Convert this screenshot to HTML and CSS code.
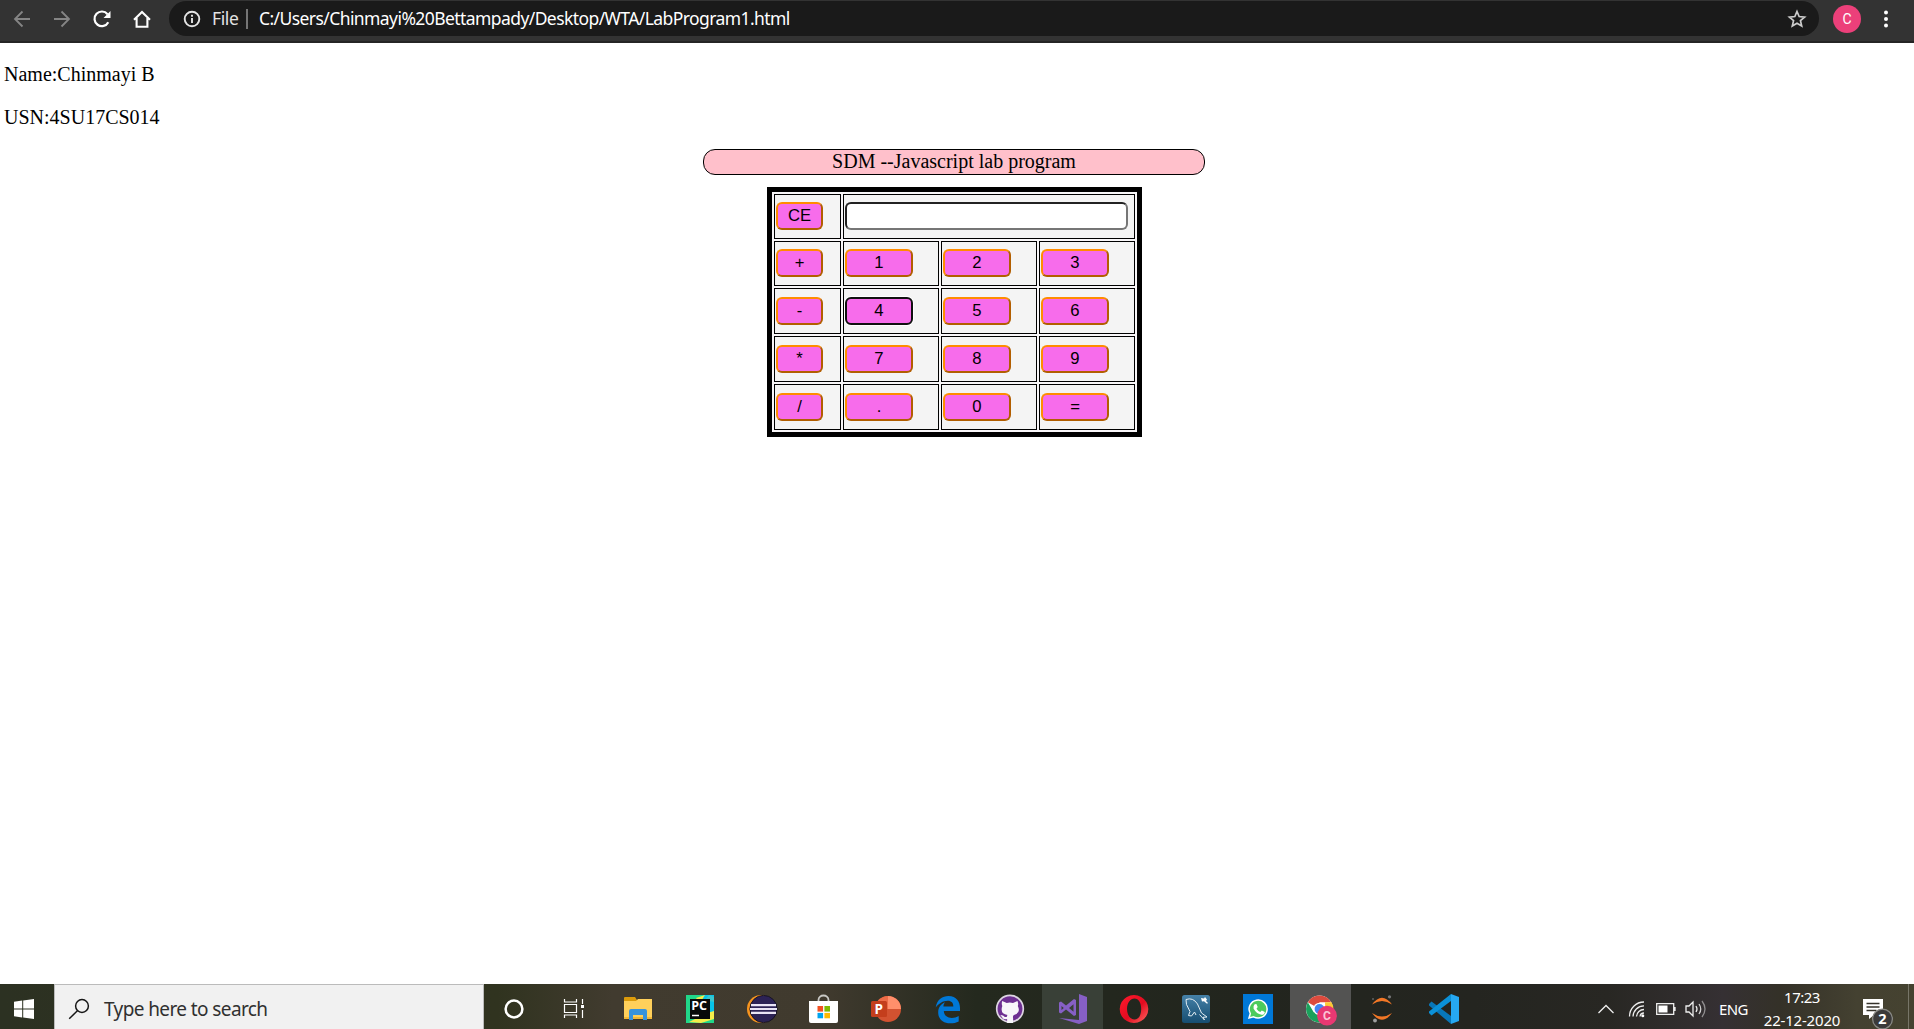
FILE: index.html
```html
<!DOCTYPE html>
<html lang="en">
<head>
<meta charset="utf-8">
<title>LabProgram1.html</title>
<link rel="stylesheet" href="styles.css">
</head>
<body>
<header class="toolbar">
  <nav class="nav">
    <svg class="dim" viewBox="0 0 20 20"><path d="M18 10H3M10.500 2.500L3 10l7.500 7.500"/></svg>
    <svg class="dim" viewBox="0 0 20 20"><path d="M2 10h15M9.500 2.500L17 10l-7.500 7.500"/></svg>
    <svg viewBox="0 0 20 20"><path d="M16.300 13.200A7.300 7.300 0 1 1 15.500 5.200" stroke-width="2.200"/><path d="M18.500 2v7h-7z" fill="#fff" stroke="none"/></svg>
    <svg viewBox="0 0 20 20"><path d="M2 10.700L10 3l8 7.700M4.600 9v8.700h10.800V9" stroke-width="2.100"/></svg>
  </nav>
  <div class="omnibox">
    <svg class="info" viewBox="0 0 18 18"><circle cx="9" cy="9" r="7.300"/><path d="M9 8v5M9 4.800v2"/></svg>
    <span class="scheme">File</span><span class="divider"></span><span class="url">C:/Users/Chinmayi%20Bettampady/Desktop/WTA/LabProgram1.html</span>
    <svg class="star" viewBox="0 0 20 20"><path d="M10 2.500l2.150 5.050 5.450.5-4.150 3.600 1.250 5.350L10 14.150 5.300 17l1.250-5.350L2.400 8.050l5.450-.5z"/></svg>
  </div>
  <span class="avatar">C</span>
  <svg class="menu" viewBox="0 0 6 18"><circle cx="3" cy="2.500" r="2"/><circle cx="3" cy="9" r="2"/><circle cx="3" cy="15.500" r="2"/></svg>
</header>

<main class="page">
  <p>Name:Chinmayi B</p>
  <p>USN:4SU17CS014</p>
  <div class="banner">SDM --Javascript lab program</div>
  <table class="calc">
    <colgroup><col class="ops"><col><col><col></colgroup>
    <tr class="short"><td><button>CE</button></td><td colspan="3"><input type="text" aria-label="Result"></td></tr>
    <tr class="short"><td><button>+</button></td><td><button>1</button></td><td><button>2</button></td><td><button>3</button></td></tr>
    <tr><td><button>-</button></td><td><button class="focused">4</button></td><td><button>5</button></td><td><button>6</button></td></tr>
    <tr><td><button>*</button></td><td><button>7</button></td><td><button>8</button></td><td><button>9</button></td></tr>
    <tr><td><button>/</button></td><td><button>.</button></td><td><button>0</button></td><td><button>=</button></td></tr>
  </table>
</main>

<footer class="taskbar">
  <div class="start"><svg viewBox="0 0 20 20"><path d="M0 2.800L8.200 1.600V9.500H0zM9.200 1.500L20 0v9.500H9.200zM0 10.500h8.200v7.900L0 17.200zM9.200 10.500H20V20L9.200 18.500z" fill="#fff"/></svg></div>
  <div class="search">
    <svg viewBox="0 0 22 22"><circle cx="14" cy="8" r="6.400"/><path d="M9.400 12.700L1.200 20.800"/></svg>
    <span>Type here to search</span>
  </div>
  <div class="apps">
    <svg viewBox="0 0 62 45"><circle cx="31" cy="25" r="8.400" fill="none" stroke="#fff" stroke-width="2.500"/></svg>
    <svg viewBox="0 0 62 45"><path d="M19.500 15v3h12v-3M19.500 20.500h12v8h-12zM19.500 34v-3h12v3M37.500 15v5M37.500 26v8" fill="none" stroke="#fff" stroke-width="1.200"/><path d="M36 21h3v3h-3z" fill="#fff"/></svg>
    <svg viewBox="0 0 62 45"><path d="M17 14q0-1 1-1h10l2 3v3H17z" fill="#dc9b0b"/><path d="M17 17h12l2-2h14v20H17z" fill="#ffd05b"/><path d="M17 33h28v2H17z" fill="#f2b735"/><path d="M22 36V27q0-2 2-2h14q2 0 2 2v9h-4v-5H26v5z" fill="#3793dc"/></svg>
    <svg viewBox="0 0 62 45"><path d="M17 11h28v28H17z" fill="#21d789"/><path d="M34 11h11v18H34z" fill="#07c3e8"/><path d="M36 11l-9 3 4 5zM45 27v8l-13 4-12-1 18-9z" fill="#f4ed4a"/><path d="M45 18v-5l-5-2-4 5z" fill="#3bc6cd"/><path d="M21 15h20v20H21z" fill="#080a09"/><path d="M23 31.500h7" stroke="#fff" stroke-width="1.500"/><text x="22.200" y="26.300" class="pc">PC</text></svg>
    <svg viewBox="0 0 62 45"><circle cx="30" cy="25" r="14" fill="#f7941e"/><circle cx="32.500" cy="25" r="13.600" fill="#2c2255" stroke="#161323"/><path d="M20 21.200h25M19 25h27M20 28.800h25" stroke="#e9e4f4" stroke-width="2.200"/></svg>
    <svg viewBox="0 0 62 45"><path d="M25.500 18v-2c0-6 10-6 10 0v2" fill="none" stroke="#c9c9c5" stroke-width="1.800"/><path d="M16 17h29v20q0 2-2 2H18q-2 0-2-2z" fill="#fff"/><path d="M24.500 22h5.600v5.600h-5.600z" fill="#f25022"/><path d="M31.400 22H37v5.600h-5.600z" fill="#7fba00"/><path d="M24.500 28.900h5.600v5.400h-5.600z" fill="#00a4ef"/><path d="M31.400 28.900H37v5.400h-5.600z" fill="#ffb900"/></svg>
    <svg viewBox="0 0 62 45"><circle cx="33" cy="25" r="13" fill="#d35230"/><path d="M33 12a13 13 0 0 1 13 13H33z" fill="#ff8f6b"/><path d="M33 12v13H20a13 13 0 0 1 13-13z" fill="#ed6c47"/><rect x="16" y="17" width="16" height="16" rx="1.500" fill="#c43e1c"/><text x="19.500" y="29.800" class="pp">P</text></svg>
    <svg viewBox="0 0 62 45"><path d="M18.700 23.500C20 15.500 25.500 12 31.500 12 39.500 12 43 18 43 24v3H26.800c.3 5 4.200 6.900 8 6.900 2.700 0 4.900-.8 6.900-2v5.500c-2.500 1.200-5.300 1.900-8.500 1.900-7.500 0-12-4.500-12-10.900 0-5 2.500-8.200 6.800-10.100-1 1.200-1.500 2.600-1.600 4.100h9.900c.1-3.200-1.600-5.600-5.600-5.600-4.800 0-9.100 2.900-12 6.700z" fill="#0078d7"/></svg>
    <svg viewBox="0 0 62 45"><circle cx="31" cy="24.700" r="13.300" fill="#6e3092" stroke="#ddd5e2" stroke-width="1.700"/><path d="M23.200 17l4.500 2q3-1 6.300 0l4.500-2q1.200 3 .3 5 3.400 7-3.800 9-1.500 1-.9 3v5h-6v-4q-4 .8-5.200-2l-1.600-2q3.200 0 4.500 2h2q0-1.700.8-2-8-1.500-5.300-9-1-2-.1-5z" fill="#f8f6fa"/></svg>
    <svg class="open" viewBox="0 0 62 45"><path d="M38 10l8 3v24l-8 3-20-6 20 2z" fill="#865fc5"/><path d="M18 18.500l2-1 5 4 8-6.500 2 1v15l-2 1-8-6.500-5 4-2-1zM20.500 22v4l2.300-2zM28 24l4.500 3.800v-7.600z" fill="#865fc5" fill-rule="evenodd"/></svg>
    <svg viewBox="0 0 62 45"><defs><linearGradient id="opera" x2="1" y2="1"><stop stop-color="#ff1b2d"/><stop offset=".55" stop-color="#e30b20"/><stop offset="1" stop-color="#ff6b64"/></linearGradient></defs><path fill-rule="evenodd" d="M31 11a14.300 14 0 1 0 .01 0zM31.500 14.500c4.200 0 6.700 4.500 6.700 10.500s-2.500 10.500-6.700 10.500S24 31 24 25s3.300-10.500 7.500-10.500z" fill="url(#opera)"/></svg>
    <svg viewBox="0 0 62 45"><defs><linearGradient id="sql" x2="0" y2="1"><stop stop-color="#4681a8"/><stop offset="1" stop-color="#164d71"/></linearGradient></defs><rect x="17" y="11" width="28" height="28" rx="2.500" fill="url(#sql)"/><path d="M21 15.500q7-2.500 11.500 4.500l4 9 5.500 4-4 .3 1.500 2.700-5-5.500M21 15.500l.5 5 3.500 7-1.500 4 3 .5 3-4 1.500 3" fill="none" stroke="#e4eef4"/><path d="M36 14l3 .5 1-1.500 2 2.500-1 1.500 2 2-1 .7-3-2.500-2 .3z" fill="#fff"/></svg>
    <svg viewBox="0 0 62 45"><path d="M16 10h30v30H16z" fill="#0078d7"/><path d="M22 34l1.300-4.500A9 9 0 1 1 26.600 32.800z" fill="#4ccb5d" stroke="#fff" stroke-width="1.500"/><path d="M27.700 20.300l1.700-.3 1.300 3-1.200 1.700q1.400 2.300 3.800 3.400l1.500-1.600 3 1.500q-.2 3-3.300 2.800-4.800-.7-7.900-6-1-2.500 1.100-4.500z" fill="#fff"/></svg>
    <svg class="current" viewBox="0 0 62 45"><circle cx="30.500" cy="25" r="13.500" fill="#fff"/><path d="M30.500 25L18.800 18.300A13.500 13.500 0 0 1 42.200 18.300H30.500z" fill="#dd4b3e"/><path d="M42.500 18.300A13.500 13.500 0 0 1 30.500 38.500L36.300 28 36 18.300z" fill="#fcc934"/><path d="M18.800 18.300A13.500 13.500 0 0 0 30.500 38.500L35 30 24.700 28.300z" fill="#1ba15c"/><circle cx="30.500" cy="25" r="6.200" fill="#fff"/><circle cx="30.500" cy="25" r="4.900" fill="#4285f4"/><circle cx="38" cy="31.700" r="9.900" fill="#e83872"/><text x="33.900" y="36" class="cc">C</text></svg>
    <svg viewBox="0 0 62 45"><path d="M21 20.500q10-13.500 20 0-10-7-20 0zM21 29q10 13.500 20 0-10 7-20 0z" fill="#f37726"/><circle cx="38.500" cy="12.800" r="1.600" fill="#767677"/><circle cx="22" cy="15" r="1" fill="#616262"/><circle cx="24" cy="36.500" r="1.900" fill="#9e9e9e"/></svg>
    <svg viewBox="0 0 62 45"><path d="M16 20l2.500-2.500L38 32v8L16 21.500z" fill="#0877b9"/><path d="M16 29l2.500 2.500L38 17v-7L16 27.500z" fill="#0b91d8"/><path d="M38 10l8 3v24l-8 3z" fill="#26a8f2"/></svg>
  </div>
  <div class="tray">
    <svg class="chevron" viewBox="0 0 18 12"><path d="M1.500 10L9 2.500l7.500 7.500"/></svg>
    <svg class="wifi" viewBox="0 0 18 18"><path d="M1.500 16.500A14.500 14.500 0 0 1 16 2M5 16.500A11 11 0 0 1 16 5.800M8.500 16.500A7.500 7.500 0 0 1 16 9.500M12 16.500a4 4 0 0 1 4-3.500"/><circle cx="14.800" cy="15.800" r="1.500" class="solid"/></svg>
    <svg class="battery" viewBox="0 0 20 12"><path d="M.7.700h17v10.600H.7zM19 4v4"/><path class="solid" d="M2.500 2.500h9v7h-9z"/></svg>
    <svg class="speaker" viewBox="0 0 22 18"><path d="M1 6h3l4-4v14l-4-4H1zM11 6q2 3 0 6"/><path d="M14 4q3.500 5 0 10" opacity=".85"/><path d="M17 1q6 8 0 16" opacity=".5"/></svg>
    <span class="lang">ENG</span>
    <div class="clock"><span>17:23</span><span class="date">22-12-2020</span></div>
    <svg class="notes" viewBox="0 0 32 32"><path d="M1 1h20v16h-9l-5 4v-4H1z" fill="#fff"/><path d="M4.500 5.500h13M4.500 9h13M4.500 12.500h10" stroke="#34322a" stroke-width="1.300"/><circle cx="20.500" cy="21" r="9.900" fill="#3b3a3a" stroke="#888884"/><text x="16.300" y="26" class="count">2</text></svg>
    <span class="peek"></span>
  </div>
</footer>
</body>
</html>
```
FILE: styles.css
```css
* { box-sizing: border-box; }

body {
  margin: 0;
  height: 1029px;
  display: flex;
  flex-direction: column;
  overflow: hidden;
  background: #fff;
}

svg { display: block; flex: none; }

/* Browser toolbar */
.toolbar {
  height: 43px;
  flex: none;
  display: flex;
  align-items: flex-start;
  background: #333;
  border-bottom: 2px solid #252525;
  font-family: "Noto Sans", sans-serif;
}
.nav { display: flex; gap: 20px; padding: 9px 17px 0 12px; }
.nav svg { width: 20px; height: 20px; fill: none; stroke: #fff; stroke-width: 1.800; }
.nav .dim { stroke: #858585; }
.omnibox {
  width: 1650px;
  height: 35px;
  margin-top: 1px;
  padding: 0 12px 0 14px;
  display: flex;
  align-items: center;
  border-radius: 18px;
  background: #1a1a1a;
  color: #fff;
  font-size: 17.500px;
  line-height: 24px;
  white-space: nowrap;
}
.info { width: 18px; height: 18px; fill: none; stroke: #e4e4e4; stroke-width: 1.900; }
.scheme { width: 26px; margin: -1px 0 0 11px; color: #e2e2e2; letter-spacing: -0.400px; }
.divider { width: 2px; height: 20px; margin: 0 11px 0 8px; background: #757575; }
.url { margin-top: -1px; letter-spacing: -0.580px; }
.star { width: 20px; height: 20px; margin-left: auto; fill: none; stroke: #ccc; stroke-width: 1.700; }
.avatar {
  width: 28px;
  height: 28px;
  margin: 5px 0 0 14px;
  border-radius: 50%;
  background: #ec407a;
  color: #fff;
  font: 14px/28px Roboto, sans-serif;
  text-align: center;
}
.menu { width: 6px; height: 18px; margin: 10px 0 0 22px; fill: #fff; }

/* Lab page */
.page {
  flex: 1;
  padding: 20px 0 0;
  font: 20px/22px "Liberation Serif", serif;
  color: #000;
}
.page p { margin: 0 0 21px 4px; }
.banner {
  width: 502px;
  height: 26px;
  margin: 0 0 12px 703px;
  border: 1px solid #000;
  border-radius: 12px;
  background: #ffc0cb;
  line-height: 22px;
  text-align: center;
}
.calc {
  width: 375px;
  height: 250px;
  margin-left: 767px;
  table-layout: fixed;
  border: 5px solid #000;
  border-spacing: 2px;
  background: #f8f6f8;
}
.calc col { width: 96px; }
.calc .ops { width: 67px; }
.calc tr { height: 46px; }
.calc .short { height: 45px; }
.calc td { padding: 0 1px; border: 1px solid #000; background: #f4f4f4; vertical-align: middle; }
.calc .short td { padding-bottom: 1px; }
.calc button, .calc input {
  display: block;
  width: 68px;
  height: 28px;
  margin: 0;
  padding: 0;
  border: 2px solid;
  border-radius: 6px;
}
.calc button {
  border-color: #ff8c00 #b25e00 #b25e00 #ff8c00;
  background: #f76ceb;
  color: #000;
  font: 16.667px "Liberation Sans", sans-serif;
}
.calc td:first-child button { width: 47px; }
.calc .focused { border-color: #101010; box-shadow: 0 0 0 1px #fff; }
.calc input { width: 283px; border-color: #222 #767676 #767676 #222; background: #fff; }

/* Taskbar */
.taskbar {
  height: 45px;
  flex: none;
  display: flex;
  background: linear-gradient(90deg, #2c3122 0, #30331f 26%, #413b2f 32%, #403a2e 43%, #24291e 51%, #22251e 65%, #242520 77%, #282723 84%, #353033 90%, #343128 93%, #444131 97%, #454230 100%);
  color: #fff;
  font-family: "Noto Sans", sans-serif;
}
.start { width: 54px; padding: 15px 0 0 14px; }
.start svg { width: 20px; height: 20px; }
.search {
  width: 430px;
  margin-right: -1px;
  display: flex;
  align-items: center;
  gap: 14px;
  padding: 3px 0 0 13px;
  border: solid #bbb;
  border-width: 1px 1px 0;
  background: #f1f1f1;
  color: #303030;
  font-size: 19px;
  letter-spacing: -0.600px;
}
.search span { padding-top: 1px; }
.search svg { width: 22px; height: 22px; fill: none; stroke: #171717; stroke-width: 1.500; }
.apps { display: flex; }
.apps svg { width: 62px; height: 45px; }
.open { background: linear-gradient(90deg, transparent 1px, #394037 1px); }
.current { background: linear-gradient(90deg, transparent 1px, #535352 1px); }
.pc { font: bold 12.500px "Open Sans", sans-serif; fill: #fff; }
.pp { font: bold 13.500px "Open Sans", sans-serif; fill: #fff; }
.cc { font: bold 12px Roboto, sans-serif; fill: #fbc6d6; }
.tray { flex: 1; display: flex; align-items: flex-start; }
.tray svg { fill: none; stroke: #eee; stroke-width: 1.300; }
.tray .solid { fill: #fff; stroke: none; }
.chevron { width: 18px; height: 12px; margin: 19px 0 0 122px; }
.wifi { width: 18px; height: 18px; margin: 16px 0 0 13px; }
.battery { width: 20px; height: 12px; margin: 19px 0 0 10px; }
.speaker { width: 22px; height: 18px; margin: 16px 0 0 9px; }
.lang { width: 30px; margin: 13px 0 0 12px; font-size: 15px; line-height: 24px; letter-spacing: -0.600px; }
.clock {
  width: 80px;
  margin: 2px 0 0 13px;
  display: flex;
  flex-direction: column;
  align-items: center;
  font-size: 15px;
  line-height: 23px;
  letter-spacing: -0.500px;
  white-space: nowrap;
}
.date { letter-spacing: -0.200px; }
.tray .notes { width: 32px; height: 32px; margin: 14px 0 0 20px; }
.tray .notes path:first-child, .tray .notes text { stroke: none; }
.count { font: bold 14.500px "Noto Sans", sans-serif; fill: #fff; }
.peek { width: 1px; height: 45px; margin-left: 14px; background: #777568; }
```
